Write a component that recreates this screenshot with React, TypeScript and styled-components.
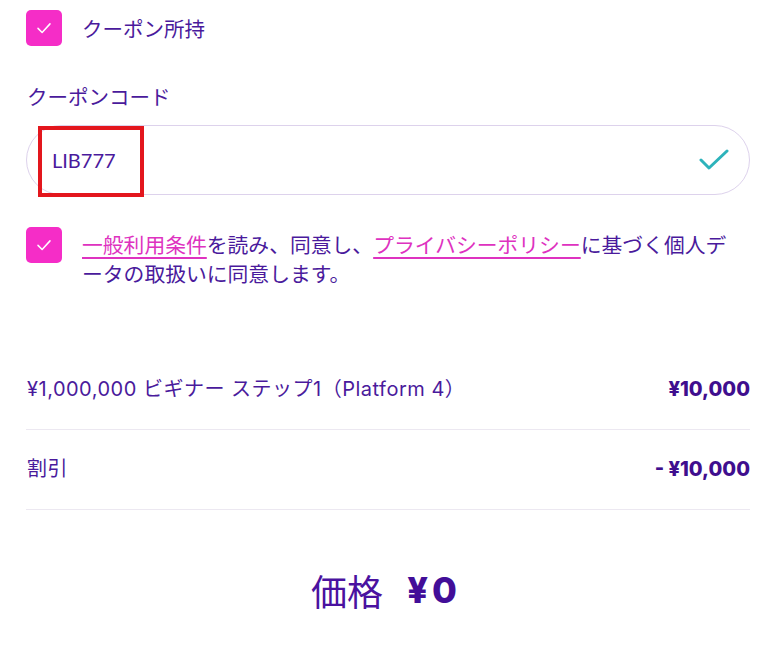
import React from "react";
import styled, { createGlobalStyle } from "styled-components";

const Global = createGlobalStyle`
  html, body { margin: 0; padding: 0; background: #ffffff; }
  body {
    font-family: "Inter", "Noto Sans CJK JP", sans-serif;
    color: #4a1a9c;
  }
`;

const Page = styled.div`
  width: 778px;
  box-sizing: border-box;
  padding: 10px 28px 0 26px;
  display: flex;
  flex-direction: column;
`;

const CheckRow = styled.label<{ $align?: string }>`
  display: flex;
  align-items: ${(p) => p.$align || "center"};
  gap: 20px;
`;

const Box = styled.span`
  flex: 0 0 36px;
  width: 36px;
  height: 36px;
  border-radius: 5px;
  background: #f52dc7;
  display: flex;
  align-items: center;
  justify-content: center;
`;

const Label = styled.span`
  font-size: 20.5px;
  line-height: 30px;
  font-family: "Noto Sans CJK JP", sans-serif;
  color: #4a1a9c;
`;

const FieldLabel = styled.div`
  margin-top: 35px;
  font-size: 20.5px;
  line-height: 30px;
  font-family: "Noto Sans CJK JP", sans-serif;
  color: #4a1a9c;
  padding-left: 1px;
`;

const InputWrap = styled.div`
  position: relative;
  margin-top: 14px;
  height: 70px;
  box-sizing: border-box;
  border: 1px solid #ddd2ec;
  border-radius: 35px;
  display: flex;
  align-items: center;
  justify-content: space-between;
  padding: 0 20px 0 25px;
`;

const InputText = styled.span`
  font-family: "Lato", sans-serif;
  font-size: 20px;
  color: #4a1a9c;
`;

const Annotation = styled.div`
  position: absolute;
  left: 11px;
  top: 0px;
  width: 106px;
  height: 71px;
  box-sizing: border-box;
  border: 4px solid #e3161d;
`;

const Terms = styled.div`
  margin-top: 32px;
`;

const TermsText = styled.p`
  margin: 0;
  margin-top: 3px;
  font-family: "Noto Sans CJK JP", sans-serif;
  font-size: 20.8px;
  line-height: 29px;
  color: #4a1a9c;
  width: 655px;
`;

const Link = styled.span`
  color: #de32c0;
  text-decoration: underline;
  text-underline-offset: 4px;
  text-decoration-thickness: 2px;
`;

const Rows = styled.div`
  margin-top: 62px;
  display: flex;
  flex-direction: column;
`;

const Row = styled.div`
  display: flex;
  justify-content: space-between;
  align-items: center;
  padding: 24px 0 25px 1px;
  border-bottom: 1px solid #ece8f1;
`;

const RowLabel = styled.span`
  font-family: "Inter", "Noto Sans CJK JP", sans-serif;
  font-size: 20px;
  line-height: 30px;
  letter-spacing: 0.5px;
  color: #4a1a9c;
`;

const RowValue = styled.span`
  font-family: "Inter", "Noto Sans CJK JP", sans-serif;
  font-weight: 800;
  font-size: 20px;
  line-height: 30px;
  color: #3f0e8e;
`;

const Total = styled.div`
  margin-top: 58px;
  display: flex;
  justify-content: center;
  align-items: center;
  gap: 24px;
  font-size: 36px;
  line-height: 44px;
  color: #4a12a0;
  padding-right: 4px;
`;

const TotalLabel = styled.span`
  font-family: "Noto Sans CJK JP", sans-serif;
  font-weight: 400;
`;

const TotalValue = styled.span`
  font-family: "Inter", "Noto Sans CJK JP", sans-serif;
  font-weight: 800;
  letter-spacing: 4px;
  color: #420e98;
`;

const Check = ({ size = 18, color = "#fff", w = 2 }: { size?: number; color?: string; w?: number }) => (
  <svg width={size} height={size} viewBox="0 0 24 24" fill="none">
    <polyline points="4,12.5 9.5,18 20,6.5" stroke={color} strokeWidth={w} strokeLinecap="round" strokeLinejoin="round" />
  </svg>
);

export default function App() {
  return (
    <>
      <Global />
      <Page>
        <CheckRow>
          <Box>
            <Check />
          </Box>
          <Label>クーポン所持</Label>
        </CheckRow>

        <FieldLabel>クーポンコード</FieldLabel>
        <InputWrap>
          <InputText>LIB777</InputText>
          <svg width="30" height="24" viewBox="0 0 30 24" fill="none">
            <polyline points="2,12 10,20 28,3" stroke="#2db3bb" strokeWidth="3" strokeLinecap="round" strokeLinejoin="round" />
          </svg>
          <Annotation />
        </InputWrap>

        <Terms>
          <CheckRow $align="flex-start">
            <Box>
              <Check />
            </Box>
            <TermsText>
              <Link>一般利用条件</Link>を読み、同意し、<Link>プライバシーポリシー</Link>に基づく個人データの取扱いに同意します。
            </TermsText>
          </CheckRow>
        </Terms>

        <Rows>
          <Row>
            <RowLabel>¥1,000,000 ビギナー ステップ1（Platform 4）</RowLabel>
            <RowValue>¥10,000</RowValue>
          </Row>
          <Row>
            <RowLabel>割引</RowLabel>
            <RowValue>- ¥10,000</RowValue>
          </Row>
        </Rows>

        <Total>
          <TotalLabel>価格</TotalLabel>
          <TotalValue>¥0</TotalValue>
        </Total>
      </Page>
    </>
  );
}
